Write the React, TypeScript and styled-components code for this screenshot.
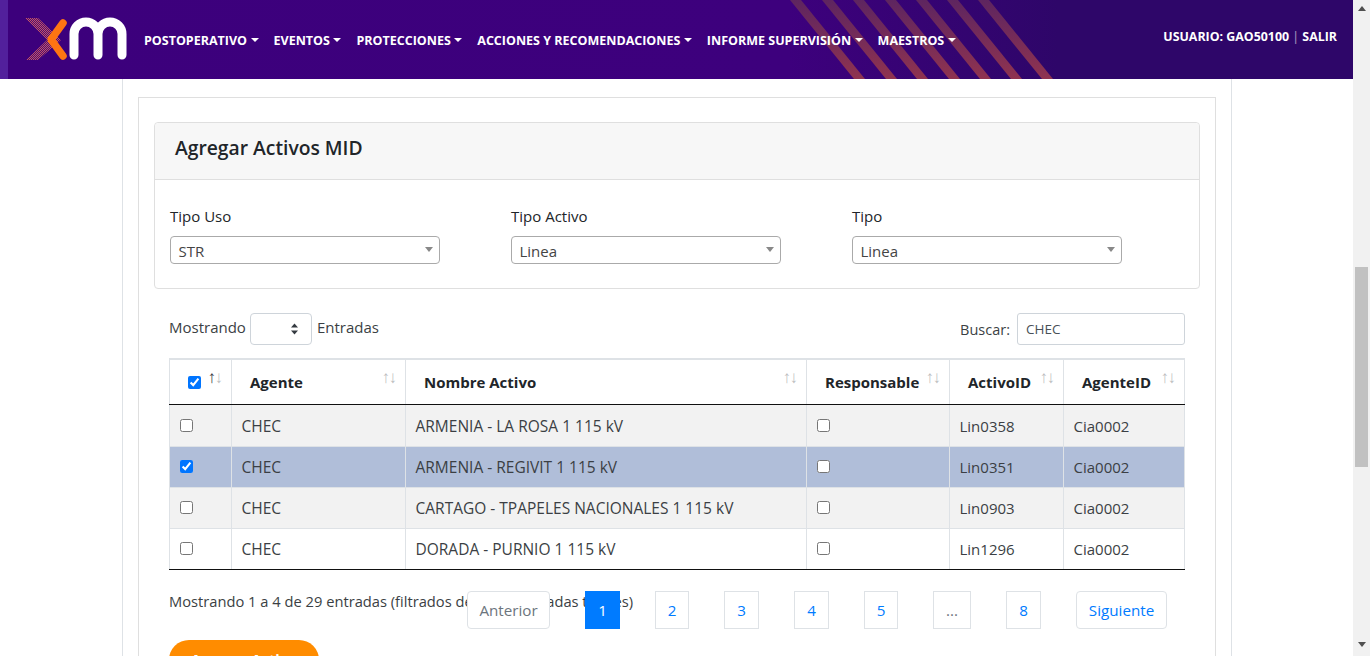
import styled, { createGlobalStyle } from 'styled-components';

const GlobalStyle = createGlobalStyle`
  html, body {
    margin: 0;
    padding: 0;
    height: 100%;
    overflow: hidden;
    background: #fff;
    font-family: 'Open Sans', 'Noto Sans', sans-serif;
    color: #212529;
  }
  * {
    box-sizing: border-box;
  }
`;

const Shell = styled.div`
  display: flex;
  width: 1370px;
  height: 656px;
  overflow: hidden;
`;

const Page = styled.div`
  width: 1353px;
  height: 656px;
  overflow: hidden;
`;

const Scrollbar = styled.div`
  width: 17px;
  height: 656px;
  background: #f1f1f1;
  display: flex;
  flex-direction: column;
  align-items: center;
  padding-top: 6px;
`;

const ArrowUp = styled.div`
  width: 0;
  height: 0;
  border-left: 4px solid transparent;
  border-right: 4px solid transparent;
  border-bottom: 5px solid #505050;
`;

const ArrowDown = styled.div`
  width: 0;
  height: 0;
  border-left: 4px solid transparent;
  border-right: 4px solid transparent;
  border-top: 5px solid #505050;
  margin-top: 175px;
`;

const Thumb = styled.div`
  width: 13px;
  height: 200px;
  background: #c1c1c1;
  margin-top: 256px;
`;

const Header = styled.header`
  position: relative;
  display: flex;
  align-items: center;
  height: 79px;
  border-left: 8px solid #52209c;
  background: linear-gradient(90deg, #3c007c 0%, #3d007d 58%, #2e0669 78%, #2e0669 100%);
  color: #fff;
  overflow: hidden;
`;

const Stripes = styled.svg`
  position: absolute;
  left: 782px;
  top: 0;
`;

const Logo = styled.svg`
  flex: none;
  position: relative;
`;

const Nav = styled.nav`
  position: relative;
  display: flex;
  align-items: center;
  margin: 1px 0 0 8px;
  gap: 15px;
  height: 79px;
`;

const NavItem = styled.span`
  display: inline-flex;
  align-items: center;
  font-size: 12.5px;
  font-weight: 700;
  white-space: nowrap;
  &::after {
    content: '';
    margin-left: 3.5px;
    border-top: 4px solid #fff;
    border-left: 4px solid transparent;
    border-right: 4px solid transparent;
  }
`;

const UserBox = styled.div`
  position: relative;
  margin-left: auto;
  margin-right: 16px;
  margin-top: -7px;
  font-size: 12.4px;
  font-weight: 700;
  white-space: nowrap;
  span {
    font-weight: 400;
    opacity: 0.6;
  }
`;

const Outer = styled.main`
  width: 1110px;
  margin-left: 122px;
  padding: 18px 15px 0;
  border-left: 1px solid #dee2e6;
  border-right: 1px solid #dee2e6;
  height: 577px;
  overflow: hidden;
`;

const MainCard = styled.section`
  width: 1078px;
  border: 1px solid #dfdfdf;
  padding: 24px 15px 0;
  height: 600px;
`;

const Panel = styled.div`
  width: 1046px;
  height: 167px;
  border: 1px solid #dfdfdf;
  border-radius: 4px;
`;

const PanelHead = styled.div`
  height: 57px;
  display: flex;
  align-items: center;
  padding: 0 0 7px 20px;
  background: #f7f7f7;
  border-bottom: 1px solid #dfdfdf;
  font-size: 19.3px;
  font-weight: 600;
  border-radius: 4px 4px 0 0;
`;

const Filters = styled.div`
  display: grid;
  grid-template-columns: repeat(3, 341px);
  padding: 25px 0 0 15px;
`;

const Filter = styled.div`
  display: flex;
  flex-direction: column;
  gap: 9px;
`;

const FilterLabel = styled.label`
  font-size: 15px;
  line-height: 22px;
`;

const Combo = styled.div`
  width: 270px;
  height: 28px;
  display: flex;
  align-items: center;
  justify-content: space-between;
  padding: 2px 6px 0 7.5px;
  border: 1px solid #aaa;
  border-radius: 4px;
  font-size: 15px;
  color: #444;
  &::after {
    content: '';
    margin-top: -4px;
    border-top: 5px solid #888;
    border-left: 4px solid transparent;
    border-right: 4px solid transparent;
  }
`;

const TableTools = styled.div`
  display: flex;
  align-items: center;
  justify-content: space-between;
  width: 1016px;
  margin: 24px 0 13px 15px;
  height: 32px;
  font-size: 14.5px;
`;

const ToolGroup = styled.div`
  display: flex;
  align-items: center;
  gap: 4px;
  color: #3b3f44;
`;

const LengthText = styled.span`
  font-size: 15px;
  margin-bottom: 5px;
`;

const LengthSelect = styled.div`
  width: 62px;
  height: 32px;
  margin-right: 1px;
  display: flex;
  align-items: center;
  justify-content: flex-end;
  padding-right: 12px;
  border: 1px solid #ced4da;
  border-radius: 4px;
`;

const SearchBox = styled.input`
  width: 168px;
  height: 32px;
  margin-left: 3px;
  padding: 0 8px;
  border: 1px solid #ced4da;
  border-radius: 3px;
  font-family: inherit;
  font-size: 13.5px;
  color: #495057;
`;

const DataTable = styled.table`
  width: 1016px;
  margin-left: 15px;
  table-layout: fixed;
  border-collapse: collapse;
  border-top: 2px solid #dee2e6;
  border-left: 1px solid #dee2e6;
  font-size: 15.5px;
  color: #3b3f44;
  tbody tr:first-child {
    height: 42px;
  }
  tbody tr:first-child td {
    padding-bottom: 0;
  }
  tbody tr:last-child td {
    border-bottom: 1px solid #111;
  }
`;

const HeadCell = styled.th<{ $pad: number; $sorted?: boolean }>`
  position: relative;
  height: 45px;
  padding: 1px 0 0 ${(p) => p.$pad}px;
  text-align: left;
  font-size: 15px;
  font-weight: 700;
  color: #212529;
  border-right: 1px solid #dee2e6;
  border-bottom: 1px solid #111;
  &::before,
  &::after {
    position: absolute;
    top: 9px;
    font-family: 'Liberation Sans', sans-serif;
    font-size: 17px;
    font-weight: 400;
    line-height: 18px;
    color: #212529;
    opacity: 0.3;
  }
  &::before {
    content: '↑';
    right: 15px;
    opacity: ${(p) => (p.$sorted ? 0.9 : 0.3)};
  }
  &::after {
    content: '↓';
    right: 8px;
  }
`;

const Row = styled.tr<{ $shade: string }>`
  height: 41px;
  background: ${(p) => p.$shade};
`;

const Cell = styled.td`
  padding: 1px 0 0 9.5px;
  border-right: 1px solid #dee2e6;
  border-bottom: 1px solid #dee2e6;
  white-space: nowrap;
`;

const IdCell = styled(Cell)`
  font-size: 15px;
`;

const CheckCell = styled(Cell)`
  padding: 0 0 1px 10px;
`;

const Box = styled.input`
  display: block;
  width: 13px;
  height: 13px;
  margin: 0;
`;

const HeadBox = styled(Box)`
  display: inline-block;
  vertical-align: middle;
  margin: -4px 0 0 18px;
`;

const FootStack = styled.div`
  display: grid;
  width: 1016px;
  margin: 21px 0 0 15px;
  height: 38px;
`;

const FootInfo = styled.div`
  grid-area: 1 / 1;
  font-size: 14.7px;
  line-height: 21px;
  color: #3b3f44;
`;

const Pagination = styled.div`
  grid-area: 1 / 1;
  justify-self: end;
  display: flex;
  gap: 35px;
  margin-right: 18px;
`;

const PageBtn = styled.span<{ $active?: boolean; $muted?: boolean; $w?: number; $round?: boolean }>`
  display: flex;
  align-items: center;
  justify-content: center;
  height: 38px;
  padding-top: 1px;
  width: ${(p) => p.$w ?? 35}px;
  border: 1px solid ${(p) => (p.$active ? '#007bff' : '#dee2e6')};
  border-radius: ${(p) => (p.$round ? '4px' : '0')};
  background: ${(p) => (p.$active ? '#007bff' : '#fff')};
  color: ${(p) => (p.$active ? '#fff' : p.$muted ? '#6c757d' : '#007bff')};
  font-size: 15.2px;
`;

const AddButton = styled.button`
  display: block;
  width: 150px;
  height: 50px;
  margin: 11px 0 0 15px;
  padding: 0 0 10px;
  border: 0;
  border-radius: 20px;
  background: #ff8c00;
  color: #fff;
  font-family: inherit;
  font-size: 14.5px;
  font-weight: 700;
`;

const rows = [
  { name: 'ARMENIA - LA ROSA 1 115 kV', id: 'Lin0358', shade: '#f2f2f2', checked: false },
  { name: 'ARMENIA - REGIVIT 1 115 kV', id: 'Lin0351', shade: '#b0bed9', checked: true },
  { name: 'CARTAGO - TPAPELES NACIONALES 1 115 kV', id: 'Lin0903', shade: '#f2f2f2', checked: false },
  { name: 'DORADA - PURNIO 1 115 kV', id: 'Lin1296', shade: '#fff', checked: false },
];

const stripeTops = [0, 32, 63, 95, 126, 157, 188];

function App() {
  return (
    <Shell>
      <GlobalStyle />
      <Page>
        <Header>
          <Stripes width="270" height="79" viewBox="0 0 270 79">
            <defs>
              <linearGradient id="stripe" x1="0" y1="0" x2="0" y2="79" gradientUnits="userSpaceOnUse">
                <stop offset="0" stopColor="#5e2560" />
                <stop offset="1" stopColor="#8f3350" />
              </linearGradient>
            </defs>
            {stripeTops.map((x) => (
              <polygon key={x} points={`${x},0 ${x + 11},0 ${x + 75},79 ${x + 64},79`} fill="url(#stripe)" />
            ))}
          </Stripes>
          <Logo width="128" height="79" viewBox="8 0 128 79">
            <defs>
              <pattern id="check" width="2" height="2" patternUnits="userSpaceOnUse">
                <rect width="2" height="2" fill="#4c1070" />
                <rect width="1" height="1" fill="#c4506a" />
                <rect x="1" y="1" width="1" height="1" fill="#c4506a" />
              </pattern>
            </defs>
            <polygon points="25,18 38,18 61,40 38,60 26,60 47,40" fill="url(#check)" />
            <path d="M63 23 L51 39.5 L63 56" fill="none" stroke="#ff7512" strokeWidth="7.5" strokeLinecap="round" strokeLinejoin="round" />
            <path
              d="M74 55 V34 A12 12 0 0 1 98 34 V55 M98 34 A12 12 0 0 1 122 34 V55"
              fill="none"
              stroke="#fff"
              strokeWidth="9"
              strokeLinecap="round"
            />
          </Logo>
          <Nav>
            <NavItem>POSTOPERATIVO</NavItem>
            <NavItem>EVENTOS</NavItem>
            <NavItem>PROTECCIONES</NavItem>
            <NavItem>ACCIONES Y RECOMENDACIONES</NavItem>
            <NavItem>INFORME SUPERVISIÓN</NavItem>
            <NavItem>MAESTROS</NavItem>
          </Nav>
          <UserBox>
            USUARIO: GAO50100 <span>|</span> SALIR
          </UserBox>
        </Header>
        <Outer>
          <MainCard>
            <Panel>
              <PanelHead>Agregar Activos MID</PanelHead>
              <Filters>
                <Filter>
                  <FilterLabel>Tipo Uso</FilterLabel>
                  <Combo>STR</Combo>
                </Filter>
                <Filter>
                  <FilterLabel>Tipo Activo</FilterLabel>
                  <Combo>Linea</Combo>
                </Filter>
                <Filter>
                  <FilterLabel>Tipo</FilterLabel>
                  <Combo>Linea</Combo>
                </Filter>
              </Filters>
            </Panel>
            <TableTools>
              <ToolGroup>
                <LengthText>Mostrando</LengthText>
                <LengthSelect>
                  <svg width="9" height="12" viewBox="0 0 9 12">
                    <path d="M4.5 0.5 L8 4.5 H1 Z M4.5 11.5 L8 7.5 H1 Z" fill="#343a40" />
                  </svg>
                </LengthSelect>
                <LengthText>Entradas</LengthText>
              </ToolGroup>
              <ToolGroup>
                Buscar:
                <SearchBox defaultValue="CHEC" />
              </ToolGroup>
            </TableTools>
            <DataTable>
              <colgroup>
                <col width="62" />
                <col width="174" />
                <col width="401" />
                <col width="143" />
                <col width="114" />
                <col width="121" />
              </colgroup>
              <thead>
                <tr>
                  <HeadCell $pad={0} $sorted>
                    <HeadBox type="checkbox" defaultChecked />
                  </HeadCell>
                  <HeadCell $pad={18}>Agente</HeadCell>
                  <HeadCell $pad={18}>Nombre Activo</HeadCell>
                  <HeadCell $pad={18}>Responsable</HeadCell>
                  <HeadCell $pad={18}>ActivoID</HeadCell>
                  <HeadCell $pad={18}>AgenteID</HeadCell>
                </tr>
              </thead>
              <tbody>
                {rows.map((r) => (
                  <Row key={r.id} $shade={r.shade}>
                    <CheckCell>
                      <Box type="checkbox" defaultChecked={r.checked} />
                    </CheckCell>
                    <Cell>CHEC</Cell>
                    <Cell>{r.name}</Cell>
                    <CheckCell>
                      <Box type="checkbox" />
                    </CheckCell>
                    <IdCell>{r.id}</IdCell>
                    <IdCell>Cia0002</IdCell>
                  </Row>
                ))}
              </tbody>
            </DataTable>
            <FootStack>
              <FootInfo>Mostrando 1 a 4 de 29 entradas (filtrados de 1,234 entradas totales)</FootInfo>
              <Pagination>
                <PageBtn $muted $round $w={83}>Anterior</PageBtn>
                <PageBtn $active>1</PageBtn>
                <PageBtn $w={34}>2</PageBtn>
                <PageBtn>3</PageBtn>
                <PageBtn>4</PageBtn>
                <PageBtn $w={34}>5</PageBtn>
                <PageBtn $muted $w={38}>...</PageBtn>
                <PageBtn>8</PageBtn>
                <PageBtn $round $w={91}>Siguiente</PageBtn>
              </Pagination>
            </FootStack>
            <AddButton>Agregar Activo</AddButton>
          </MainCard>
        </Outer>
      </Page>
      <Scrollbar>
        <ArrowUp />
        <Thumb />
        <ArrowDown />
      </Scrollbar>
    </Shell>
  );
}

export default App;
